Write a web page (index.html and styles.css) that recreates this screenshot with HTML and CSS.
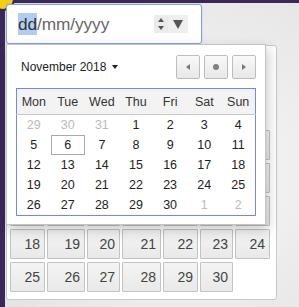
FILE: index.html
```html
<!DOCTYPE html>
<html lang="en">
<head>
  <meta charset="UTF-8">
  <title>Date picker</title>
  <link rel="stylesheet" href="styles.css">
</head>
<body>

  <div class="desk">
    <div class="badge"></div>

    <div class="picker">
      <div class="date-input">
        <span class="field"><span class="sel">dd</span>/mm/yyyy</span>
        <span class="spin"><i class="up"></i><i class="down"></i></span>
        <span class="drop"><i></i></span>
      </div>

      <!-- only the last two weeks show from under the popup -->
      <div class="month-card">
        <div class="cell empty"></div>
        <div class="cell empty"></div>
        <div class="cell empty"></div>
        <div class="cell empty"></div>
        <div class="cell"></div>
        <div class="cell"></div>
        <div class="cell"></div>
        <div class="cell"></div>
        <div class="cell"></div>
        <div class="cell"></div>
        <div class="cell"></div>
        <div class="cell"></div>
        <div class="cell"></div>
        <div class="cell"></div>
        <div class="cell"></div>
        <div class="cell"></div>
        <div class="cell"></div>
        <div class="cell"></div>
        <div class="cell"></div>
        <div class="cell"></div>
        <div class="cell"></div>
        <div class="cell">18</div>
        <div class="cell">19</div>
        <div class="cell">20</div>
        <div class="cell">21</div>
        <div class="cell">22</div>
        <div class="cell">23</div>
        <div class="cell">24</div>
        <div class="cell">25</div>
        <div class="cell">26</div>
        <div class="cell">27</div>
        <div class="cell">28</div>
        <div class="cell">29</div>
        <div class="cell">30</div>
      </div>

      <div class="popup">
        <div class="popup-head">
          <div class="month">November 2018 <i class="caret"></i></div>
          <div class="nav">
            <button class="nav-btn"><i class="tri-left"></i></button>
            <button class="nav-btn"><i class="dot"></i></button>
            <button class="nav-btn"><i class="tri-right"></i></button>
          </div>
        </div>

        <table class="cal">
          <thead>
            <tr><th>Mon</th><th>Tue</th><th>Wed</th><th>Thu</th><th>Fri</th><th>Sat</th><th>Sun</th></tr>
          </thead>
          <tbody>
            <tr><td class="other">29</td><td class="other">30</td><td class="other">31</td><td>1</td><td>2</td><td>3</td><td>4</td></tr>
            <tr><td>5</td><td class="today">6</td><td>7</td><td>8</td><td>9</td><td>10</td><td>11</td></tr>
            <tr><td>12</td><td>13</td><td>14</td><td>15</td><td>16</td><td>17</td><td>18</td></tr>
            <tr><td>19</td><td>20</td><td>21</td><td>22</td><td>23</td><td>24</td><td>25</td></tr>
            <tr><td>26</td><td>27</td><td>28</td><td>29</td><td>30</td><td class="other">1</td><td class="other">2</td></tr>
          </tbody>
        </table>
      </div>
    </div>
  </div>

</body>
</html>
```

FILE: styles.css
```css
body {
  margin: 0;
  font-family: 'Liberation Sans', Arial, sans-serif;
  background: #e4e4e4;
  overflow: hidden;
}

.desk {
  position: relative;
  box-sizing: border-box;
  height: 307px;
  border-left: 5px solid #3a2858;
  border-top: 3px solid #3a2858;
  padding: 1px 0 0 1px;
  background: radial-gradient(circle at 62% 55%, #fbfbfb 0%, #ececec 55%, #e2e2e2 100%);
}

.badge {
  position: absolute;
  left: -14px;
  top: -16px;
  width: 20px;
  height: 20px;
  border-radius: 50%;
  background: #f3cf1c;
  border: 2px solid #3a2858;
}

.picker {
  position: relative;
  width: 271px;
}

/* input */
.date-input {
  box-sizing: border-box;
  width: 196px;
  height: 40px;
  display: flex;
  align-items: center;
  padding-left: 11px;
  background: #fff;
  border: 1px solid #86a3da;
  border-radius: 3px;
  box-shadow: 0 0 2px rgba(90, 130, 210, 0.4);
}

.field {
  font-size: 17.3px;
  color: #666;
  letter-spacing: -0.1px;
}

.sel {
  background: #b2cdf4;
  color: #333;
  padding: 1px 0;
}

.spin {
  margin-left: auto;
  width: 14px;
  height: 18px;
  background: #ebebeb;
  display: flex;
  flex-direction: column;
  align-items: center;
  justify-content: center;
  gap: 4px;
}

.spin i {
  width: 0;
  height: 0;
  border-left: 3.5px solid transparent;
  border-right: 3.5px solid transparent;
}

.spin .up { border-bottom: 4px solid #555; }
.spin .down { border-top: 4px solid #555; }

.drop {
  width: 20px;
  height: 18px;
  margin-right: 13px;
  background: #eeeeee;
  display: flex;
  align-items: center;
  justify-content: center;
}

.drop i {
  width: 0;
  height: 0;
  border-left: 5.5px solid transparent;
  border-right: 5.5px solid transparent;
  border-top: 9px solid #555;
}

/* month card behind */
.month-card {
  box-sizing: border-box;
  width: 271px;
  height: 255px;
  margin-top: 1px;
  padding: 84px 6px 7px 3px;
  background: #fff;
  border: 1px solid #c9c9c9;
  border-radius: 3px;
  display: grid;
  grid-template-columns: 35px 38px 33px 39px 35px 33px 35px;
  grid-auto-rows: 30px;
  column-gap: 2px;
  row-gap: 3px;
}

.cell {
  box-sizing: border-box;
  border: 1px solid #c3c3c3;
  border-radius: 1px;
  background: linear-gradient(#f4f4f4, #e9e9e9);
  font-size: 14px;
  color: #444;
  text-align: right;
  padding: 6px 4px 0 0;
}

.cell.empty {
  visibility: hidden;
}

/* popup */
.popup {
  position: absolute;
  left: 0;
  top: 40px;
  box-sizing: border-box;
  width: 260px;
  height: 181px;
  padding: 10px 9px 9px 9px;
  background: #fff;
  border: 1px solid #c4c4c4;
  box-shadow: 2px 5px 12px rgba(0, 0, 0, 0.22);
}

.popup-head {
  display: flex;
  align-items: center;
  justify-content: space-between;
  height: 24px;
}

.month {
  padding-left: 5px;
  font-size: 12px;
  color: #222;
  display: flex;
  align-items: center;
  gap: 6px;
}

.caret {
  width: 0;
  height: 0;
  border-left: 3.5px solid transparent;
  border-right: 3.5px solid transparent;
  border-top: 4px solid #222;
}

.nav {
  display: flex;
  gap: 4px;
}

.nav-btn {
  box-sizing: border-box;
  width: 24px;
  height: 24px;
  padding: 0;
  border: 1px solid #bdbdbd;
  border-radius: 2px;
  background: linear-gradient(#f9f9f9, #e8e8e8);
  display: flex;
  align-items: center;
  justify-content: center;
}

.tri-left {
  width: 0;
  height: 0;
  border-top: 3.5px solid transparent;
  border-bottom: 3.5px solid transparent;
  border-right: 4px solid #777;
}

.tri-right {
  width: 0;
  height: 0;
  border-top: 3.5px solid transparent;
  border-bottom: 3.5px solid transparent;
  border-left: 4px solid #777;
}

.dot {
  width: 6px;
  height: 6px;
  border-radius: 50%;
  background: #808080;
}

.cal {
  width: 240px;
  margin-top: 9px;
  border-collapse: collapse;
  table-layout: fixed;
  border: 1px solid #7489df;
  font-size: 12.5px;
}

.cal th {
  height: 25px;
  padding: 0;
  font-weight: normal;
  color: #333;
  background: #f3f3f3;
  border-bottom: 1px solid #c8c8c8;
}

.cal td {
  height: 20px;
  padding: 0;
  text-align: center;
  color: #222;
}

.cal td.other {
  color: #bbb;
}

.cal td.today {
  outline: 1px solid #aaa;
  outline-offset: -1px;
}
```
